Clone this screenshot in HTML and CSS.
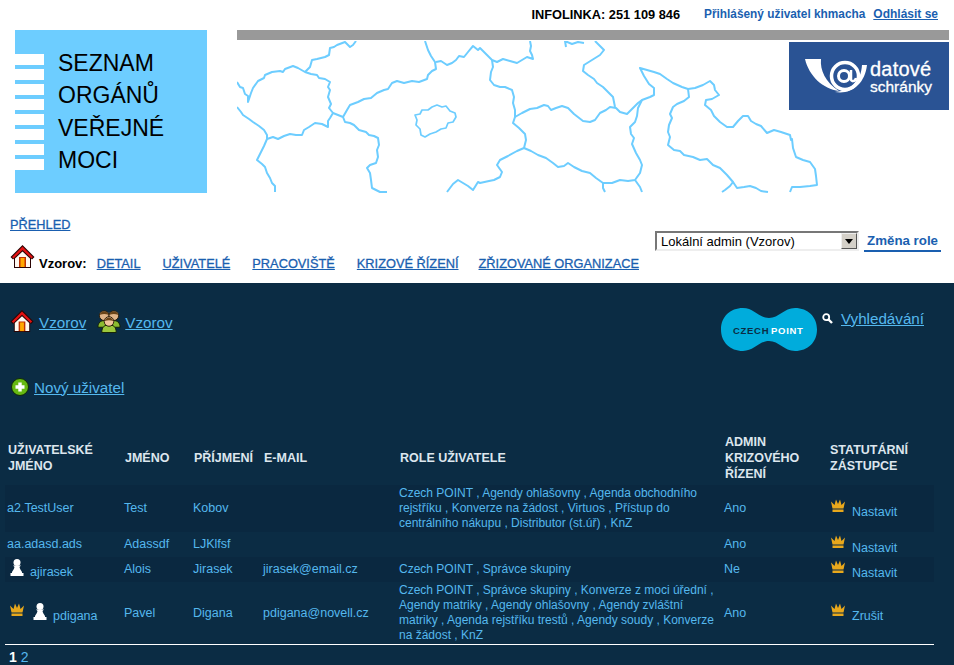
FILE: index.html
```html
<!DOCTYPE html>
<html lang="cs">
<head>
    <meta charset="UTF-8">
    <meta name="viewport" content="width=device-width, initial-scale=1.0">
    <title>Seznam orgánů veřejné moci</title>
    <link rel="stylesheet" href="styles.css">
</head>
<body>
    <svg class="icon-defs" width="0" height="0">
        <defs>
            <symbol id="house" viewBox="0 0 25 25">
                <path d="M12.500 1 24.500 13 22 15.500 21 14.500V24H4V14.500L3 15.500 .5 13z" fill="#2a0404"/>
                <path d="M12.500 2.500 23 13 21.500 14.500 12.500 6 3.500 14.500 2 13z" fill="#e41212"/>
                <path d="M12.500 7.500 20 14.500V23H5V14.500z" fill="#fff8f0"/>
                <rect x="9" y="13" width="7" height="10" fill="#c03000"/>
                <rect x="10.500" y="14" width="4" height="9" fill="#ffa800"/>
            </symbol>
            <symbol id="crown" viewBox="0 0 16 15">
                <path d="M1 3.500 4.500 7 6 1.500 8 6 10 1.500 11.500 7 15 3.500 13.500 10.500H2.500z" fill="#e8a81c"/>
                <rect x="2.500" y="11.500" width="11" height="2.500" fill="#e8a81c"/>
            </symbol>
            <symbol id="pawn" viewBox="0 0 14 17">
                <circle cx="7" cy="3.500" r="3.500" fill="#fff"/>
                <path d="M3 6.500h8L9.500 8c.5 2 1.500 3.500 2.500 5v1.500H2V13c1-1.500 2-3 2.500-5z" fill="#fff"/>
                <rect x="0.500" y="14" width="13" height="3" fill="#fff"/>
            </symbol>
        </defs>
    </svg>

    <header class="page-head">
        <div class="top-bar">
            <strong class="infoline">INFOLINKA: 251 109 846</strong>
            <span class="logged-user">Přihlášený uživatel khmacha</span>
            <a class="logout" href="#">Odhlásit se</a>
        </div>

        <div class="brand-row">
            <div class="brand">
                <div class="brand-stripes"></div>
                <div class="brand-name">SEZNAM<br>ORGÁNŮ<br>VEŘEJNÉ<br>MOCI</div>
            </div>
            <div class="map-column">
                <div class="map-bar"></div>
                <div class="map">
                    <svg class="map-lines" width="712" height="152" viewBox="237 41 712 152">
                        <g fill="none" stroke="#6dcdff" stroke-width="2" stroke-linejoin="round">
                            <path d="M237 82 240 87 243 88 245 94 248 96 248 102 251 93 253 88 258 81 264 78 265 75 272 72 280 71 283 72 285 69 293 66 298 68 305 72 311 74 317 75 319 78 325 79 330 82 328 87 330 90 328 97 331 104 329 108 333 113 330 118 328 121 328 127 322 124 315 123 309 127 304 130 302 135 296 135 290 134 284 136 278 139 273 137 267 139"/>
                            <path d="M237 107 241 112 243 115 249 119 253 122 259 126 264 130 267 135 267 139 264 146 261 152 257 160 262 164 265 167 267 173 270 178 272 183 275 186 275 192"/>
                            <path d="M305 72 310 67 312 60 317 59 325 57 329 55 330 48 334 47 337 45 345 42 350 47 353 45 356 41"/>
                            <path d="M333 113 338 115 343 117 345 122 350 123 354 125 359 130 366 132 369 135 374 136 378 138 379 145 377 150 378 157 376 163 370 165 367 168 370 173 371 180 372 188 380 192 387 192"/>
                            <path d="M343 117 347 110 350 105 358 102 364 99 371 98 377 93 384 90 388 89 392 83 397 81 404 83 412 81 419 82 427 79 428 75 432 71 436 69 435 62 431 56 428 50 425 41"/>
                            <path d="M436 62 441 61 447 65 452 63 456 60 459 56 464 57 468 52 473 46 478 50 480 48 486 54 492 60 497 62 503 59 510 61 517 63 522 60 527 57 533 59 532 55 530 51 531 46 530 41"/>
                            <path d="M492 60 493 67 491 72 490 80 494 85 500 87 505 87 512 90 514 97 513 103 515 110 515 117 513 123 519 128 525 134 526 140 524 148 517 151 508 156 500 160 497 165 502 172 500 177 494 180 489 181 480 183 478 182 473 190 468 186 458 180 453 184 447 192"/>
                            <path d="M515 117 522 113 530 109 537 108 544 105 548 106 551 110 556 108 562 106 568 108 574 114 583 121 590 122 595 120 600 113 606 110 610 107 616 108 620 112 627 114 633 108 638 103 642 100 650 97 654 95 654 88 649 84 644 76 640 68 647 70 654 72 660 74 667 79 673 83 682 87 688 89 695 88 703 85 710 81 714 85 715 90 719 95 712 99 706 100 705 105 711 110 714 116 720 122 727 127 733 127 738 121 743 116 748 116 751 121 756 124 761 126 767 133 774 130 781 132 790 135 791 140 792 139 793 148 796 157 803 160 810 162 815 169 816 176 817 185 810 186 800 187 792 187 790 192"/>
                            <path d="M688 89 689 97 684 101 677 104 673 107 670 114 672 118 669 125 668 132 670 137 668 145 674 150 680 151 684 155 693 157 700 160 707 159 713 165 720 168 727 175 733 182 730 186 725 190 722 192"/>
                            <path d="M733 182 737 188 744 187 750 186 756 188 761 191 768 192"/>
                            <path d="M642 100 638 108 637 116 635 122 630 127 631 134 634 138 632 144 636 153 640 160 642 165 640 173 635 180 628 181 620 180 612 183 603 183 603 188 605 192"/>
                            <path d="M635 180 640 187 642 192"/>
                            <path d="M524 148 531 151 538 155 546 158 553 163 558 167 564 166 568 163 574 167 582 171 590 173 596 178 603 183"/>
                            <path d="M595 41 599 45 604 50 600 55 592 60 584 65 583 71 588 75 594 79 597 83 603 87 608 92 613 97 615 107"/>
                            <path d="M566 47 565 41 572 44 578 42 584 43"/>
                            <path d="M415 115 420 114 422 110 428 110 432 107 437 105 442 107 446 106 450 111 455 113 456 117 453 122 448 123 446 128 441 129 436 132 430 134 425 137 421 135 420 129 416 125 417 120z" stroke-width="1.700"/>
                        </g>
                    </svg>
                    <div class="ds-logo">
                        <svg class="ds-mark" width="64" height="36" viewBox="0 0 64 36">
                            <path d="M0 1H16C15 12 20 24 34 33 18 31 4 18 0 1z" fill="#fff"/>
                            <path d="M30 34C46 37 60 26 62 7H57C56 22 48 32 30 34z" fill="#fff"/>
                            <circle cx="40" cy="18" r="13.500" fill="none" stroke="#fff" stroke-width="3.500"/>
                            <circle cx="39" cy="18" r="5.500" fill="none" stroke="#fff" stroke-width="3"/>
                            <path d="M46 12V21C46 24 50 24 51 20" fill="none" stroke="#fff" stroke-width="2.500"/>
                        </svg>
                        <div class="ds-name"><span class="ds-first">datové</span><span class="ds-second">schránky</span></div>
                    </div>
                </div>
            </div>
        </div>

        <div class="nav-row">
            <div class="nav-left">
                <a class="nav-link nav-overview" href="#">PŘEHLED</a>
                <div class="nav-items">
                    <svg class="nav-house"><use href="#house"/></svg>
                    <strong class="nav-org">Vzorov:</strong>
                    <a class="nav-link" href="#">DETAIL</a>
                    <a class="nav-link" href="#">UŽIVATELÉ</a>
                    <a class="nav-link" href="#">PRACOVIŠTĚ</a>
                    <a class="nav-link" href="#">KRIZOVÉ ŘÍZENÍ</a>
                    <a class="nav-link" href="#">ZŘIZOVANÉ ORGANIZACE</a>
                </div>
            </div>
            <div class="role-switch">
                <div class="select-box">
                    <select class="role-select">
                        <option>Lokální admin (Vzorov)</option>
                    </select>
                    <span class="select-arrow"></span>
                </div>
                <a class="role-change" href="#">Změna role</a>
            </div>
        </div>
    </header>

    <main class="content">
        <div class="crumb-row">
            <div class="crumbs">
                <svg class="crumb-icon"><use href="#house"/></svg>
                <a href="#">Vzorov</a>
                <svg class="crumb-icon" viewBox="0 0 25 25">
                    <path d="M1 19c0-5 3-7 7-7s7 2 7 7z" fill="#8cbc30" stroke="#142005"/>
                    <path d="M10 19c0-5 3-7 7-7s7 2 7 7z" fill="#8cbc30" stroke="#142005"/>
                    <circle cx="7.500" cy="7" r="5" fill="#e0b488" stroke="#2a1c08"/>
                    <circle cx="17.500" cy="7" r="5" fill="#e0b488" stroke="#2a1c08"/>
                    <path d="M3 6c1-5 8-5 9 0-3-1-6-1-9 0zM13 6c1-5 8-5 9 0-3-1-6-1-9 0z" fill="#6a4418"/>
                    <path d="M5 24.500c0-6 3-8 7.500-8s7.500 2 7.500 8z" fill="#9cc83c" stroke="#142005"/>
                    <circle cx="12.500" cy="13" r="5" fill="#f0c49a" stroke="#2a1c08"/>
                    <path d="M8 12.500c1-5 8-5 9 0-3-1-6-1-9 0z" fill="#6a4418"/>
                </svg>
                <a href="#">Vzorov</a>
            </div>
            <div class="tools">
                <svg class="cp-logo" width="96" height="43" viewBox="0 0 96 43">
                    <path d="M22 0C33 0 38 10 48 10S63 0 74 0C87 0 96 9 96 21.500S87 43 74 43C63 43 58 33 48 33S33 43 22 43C9 43 0 34 0 21.500S9 0 22 0z" fill="#00acdc"/>
                    <text x="12" y="25.500" class="cp-text cp-dark">CZECH</text>
                    <text x="50" y="25.500" class="cp-text cp-light">POINT</text>
                </svg>
                <svg class="search-icon" width="11" height="11" viewBox="0 0 11 11">
                    <circle cx="4.200" cy="4.200" r="3" fill="none" stroke="#fff" stroke-width="1.800"/>
                    <path d="M6.500 6.500 10 10" stroke="#fff" stroke-width="2.400"/>
                </svg>
                <a class="tools-search" href="#">Vyhledávání</a>
            </div>
        </div>

        <div class="new-user">
            <svg class="plus-icon" width="18" height="18" viewBox="0 0 18 18">
                <circle cx="9" cy="9" r="8.500" fill="#66b812" stroke="#102808"/>
                <path d="M9 4.500v9M4.500 9h9" stroke="#fff" stroke-width="3.400"/>
            </svg>
            <a href="#">Nový uživatel</a>
        </div>

        <table class="users">
            <colgroup>
                <col class="col-login"><col class="col-first"><col class="col-last"><col class="col-mail">
                <col class="col-roles"><col class="col-admin"><col class="col-stat">
            </colgroup>
            <thead>
                <tr>
                    <th>UŽIVATELSKÉ JMÉNO</th>
                    <th>JMÉNO</th>
                    <th>PŘÍJMENÍ</th>
                    <th>E-MAIL</th>
                    <th>ROLE UŽIVATELE</th>
                    <th>ADMIN KRIZOVÉHO ŘÍZENÍ</th>
                    <th>STATUTÁRNÍ ZÁSTUPCE</th>
                </tr>
            </thead>
            <tbody>
                <tr class="odd">
                    <td><a href="#">a2.TestUser</a></td>
                    <td>Test</td>
                    <td>Kobov</td>
                    <td></td>
                    <td class="roles">Czech POINT , Agendy ohlašovny , Agenda obchodního rejstříku , Konverze na žádost , Virtuos , Přístup do centrálního nákupu , Distributor (st.úř) , KnZ</td>
                    <td>Ano</td>
                    <td><svg class="ico-crown"><use href="#crown"/></svg><a href="#">Nastavit</a></td>
                </tr>
                <tr>
                    <td><a href="#">aa.adasd.ads</a></td>
                    <td>Adassdf</td>
                    <td>LJKlfsf</td>
                    <td></td>
                    <td class="roles"></td>
                    <td>Ano</td>
                    <td><svg class="ico-crown"><use href="#crown"/></svg><a href="#">Nastavit</a></td>
                </tr>
                <tr class="odd">
                    <td><svg class="ico-pawn"><use href="#pawn"/></svg><a href="#">ajirasek</a></td>
                    <td>Alois</td>
                    <td>Jirasek</td>
                    <td>jirasek@email.cz</td>
                    <td class="roles">Czech POINT , Správce skupiny</td>
                    <td>Ne</td>
                    <td><svg class="ico-crown"><use href="#crown"/></svg><a href="#">Nastavit</a></td>
                </tr>
                <tr>
                    <td><svg class="ico-crown ico-crown-user"><use href="#crown"/></svg><svg class="ico-pawn"><use href="#pawn"/></svg><a href="#">pdigana</a></td>
                    <td>Pavel</td>
                    <td>Digana</td>
                    <td>pdigana@novell.cz</td>
                    <td class="roles">Czech POINT , Správce skupiny , Konverze z moci úřední , Agendy matriky , Agendy ohlašovny , Agendy zvláštní matriky , Agenda rejstříku trestů , Agendy soudy , Konverze na žádost , KnZ</td>
                    <td>Ano</td>
                    <td><svg class="ico-crown"><use href="#crown"/></svg><a href="#">Zrušit</a></td>
                </tr>
            </tbody>
        </table>

        <div class="pager"><strong>1</strong> <a href="#">2</a></div>
    </main>
</body>
</html>
```

FILE: styles.css
```css
* {
    box-sizing: border-box;
}

html, body {
    margin: 0;
    padding: 0;
    height: 100%;
    overflow: hidden;
    font-family: "Liberation Sans", Arial, sans-serif;
    background-color: #0b2c44;
}

.icon-defs {
    display: block;
    height: 0;
}

/* Bila hlavicka */
.page-head {
    background-color: #fff;
    height: 283px;
    display: flex;
    flex-direction: column;
}

.top-bar {
    height: 30px;
    display: flex;
    justify-content: flex-end;
    align-items: center;
    padding: 0 16px 2px 0;
    font-size: 12px;
    font-weight: bold;
}

.infoline {
    color: #000;
    font-size: 12.800px;
    margin-right: 24px;
}

.logged-user {
    color: #1a5fb0;
    font-size: 11.850px;
    margin-right: 8px;
}

.logout {
    color: #1a5fb0;
    margin-top: -1px;
}

.brand-row {
    display: flex;
    padding-left: 15px;
    height: 163px;
}

.brand {
    width: 192px;
    background-color: #6dcdff;
    display: flex;
    align-items: center;
    margin-right: 30px;
}

.brand-stripes {
    width: 29px;
    height: 116px;
    margin-right: 14px;
    background: repeating-linear-gradient(to bottom, #fff 0, #fff 11px, #6dcdff 11px, #6dcdff 15px);
}

.brand-name {
    font-size: 23px;
    line-height: 32.400px;
    color: #000;
}

.map-column {
    flex: 1;
    display: flex;
    flex-direction: column;
    padding-right: 5px;
}

.map-bar {
    height: 10px;
    background-color: #999;
    margin-bottom: 1px;
}

.map {
    flex: 1;
    position: relative;
}

.map-lines {
    display: block;
}

.ds-logo {
    position: absolute;
    top: 1px;
    right: 0;
    width: 160px;
    height: 68px;
    background-color: #2a5394;
    display: flex;
    align-items: center;
    padding-left: 16px;
    color: #fff;
}

.ds-name {
    display: flex;
    flex-direction: column;
    margin-left: 1px;
    -webkit-text-stroke: 0.300px #fff;
}

.ds-first {
    font-size: 20px;
    line-height: 20px;
    letter-spacing: 0.200px;
}

.ds-second {
    font-size: 15.500px;
    line-height: 15px;
}

.nav-row {
    flex: 1;
    display: flex;
    justify-content: space-between;
    padding: 24px 13px 0 10px;
    font-size: 12.800px;
}

.nav-left {
    white-space: nowrap;
}

.nav-link {
    color: #1a5fb0;
    -webkit-text-stroke: 0.300px #1a5fb0;
}

.nav-overview {
    display: block;
    margin-bottom: 12px;
}

.nav-items {
    display: flex;
    align-items: flex-end;
    height: 27px;
}

.nav-items .nav-link {
    margin-right: 22px;
}

.nav-items .nav-link:nth-last-child(2) {
    margin-right: 20px;
}

.nav-items .nav-link:last-child {
    margin-right: 0;
}

.nav-house {
    width: 25px;
    height: 25px;
    margin-right: 4px;
    align-self: flex-start;
}

.nav-org {
    color: #000;
    font-size: 13px;
    margin-right: 10px;
}

.role-switch {
    display: flex;
    align-items: flex-start;
    margin-top: 14px;
    white-space: nowrap;
}

.select-box {
    width: 204px;
    height: 20px;
    display: flex;
    border: 2px solid;
    border-color: #777 #eee #eee #777;
    margin-right: 5px;
}

.role-select {
    flex: 1;
    min-width: 0;
    appearance: none;
    border: 0;
    background: #fff;
    font-family: inherit;
    font-size: 13px;
    padding: 0 0 0 4px;
    color: #000;
    outline: 0;
}

.select-arrow {
    width: 16px;
    background-color: #d4d0c8;
    border: 1px solid;
    border-color: #eee #555 #555 #eee;
    position: relative;
}

.select-arrow::after {
    content: "";
    position: absolute;
    left: 3px;
    top: 5px;
    border: 4px solid transparent;
    border-top: 5px solid #000;
    border-bottom: 0;
}

.role-change {
    color: #1a5fb0;
    font-size: 13.300px;
    font-weight: bold;
    text-decoration: none;
    border-bottom: 2px solid #1a5fb0;
    padding: 2px 3px;
    height: 21px;
}

/* Tmava cast */
.content {
    padding: 0 20px 0 5px;
    color: #55b8ee;
}

.content a {
    color: #55b8ee;
}

.crumb-row {
    display: flex;
    justify-content: space-between;
    height: 94px;
    padding: 25px 10px 0 0;
    font-size: 15.200px;
}

.crumbs {
    display: flex;
    align-items: flex-start;
    padding-left: 5px;
    height: 30px;
}

.crumbs a {
    margin: 6px 11px 0 5px;
}

.crumbs a:last-child {
    margin-left: 4px;
}

.crumb-icon {
    width: 24px;
    height: 24px;
    margin-top: 1px;
}

.tools {
    display: flex;
    align-items: flex-start;
}

.tools-search {
    margin-top: 2px;
}

.cp-text {
    font-family: "Liberation Sans", sans-serif;
    font-size: 9.500px;
    font-weight: bold;
    letter-spacing: 0.700px;
}

.cp-dark {
    fill: #0b2c44;
}

.cp-light {
    fill: #fff;
}

.search-icon {
    margin: 5px 8px 0 5px;
}

.new-user {
    display: flex;
    align-items: center;
    height: 20px;
    padding-left: 6px;
    font-size: 15.200px;
    margin-bottom: 37px;
}

.plus-icon {
    margin-right: 5px;
}

/* Tabulka uzivatelu */
.users {
    width: 929px;
    border-collapse: collapse;
    table-layout: fixed;
    font-size: 12.500px;
    line-height: 15px;
    border-bottom: 1px solid #fff;
}

.col-login { width: 117px; }
.col-first { width: 69px; }
.col-last { width: 70px; }
.col-mail { width: 136px; }
.col-roles { width: 325px; }
.col-admin { width: 106px; }
.col-stat { width: 106px; }

.users th {
    color: #dde6ee;
    font-weight: bold;
    text-align: left;
    height: 48px;
    padding: 0 3px 3px;
    line-height: 16px;
}

.users th:last-child {
    padding-left: 2px;
}

.users td {
    padding: 1px 2px;
    height: 25px;
    vertical-align: middle;
}

.users td a {
    text-decoration: none;
}

.users td.roles {
    font-size: 12px;
}

.users tr.odd td {
    background-color: #0a2840;
}

.ico-crown {
    width: 16px;
    height: 15px;
    margin-right: 6px;
    vertical-align: 3px;
}

.ico-crown-user {
    margin-left: 2px;
    margin-right: 5px;
}

.ico-pawn {
    width: 14px;
    height: 17px;
    margin: 0 6px 0 3px;
    vertical-align: 0;
}

.pager {
    padding: 4px 0 0 4px;
    font-size: 14px;
}

.pager strong {
    color: #fff;
}

.pager a {
    text-decoration: none;
}
```
